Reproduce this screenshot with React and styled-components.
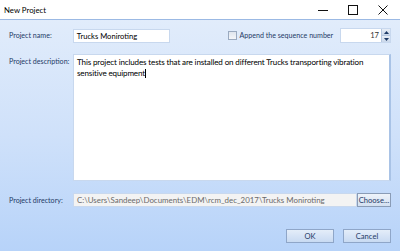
import React from 'react'
import styled, { createGlobalStyle } from 'styled-components'

const Global = createGlobalStyle`
    html, body { margin: 0; padding: 0; }
    body {
        width: 400px;
        height: 251px;
        overflow: hidden;
        font-family: Lato, "Noto Sans", sans-serif;
        font-size: 7.1px;
    }
`
const Window = styled.div`
    width: 400px;
    height: 251px;
    display: flex;
    flex-direction: column;
    background: #fff;
`
const TitleBar = styled.div`
    height: 19px;
    display: flex;
    align-items: center;
    padding-left: 4px;
    padding-right: 2px;
    border-bottom: 1px solid #9bb9e4;
    color: #000;
    font-size: 7.8px;
`
const Title = styled.div`
    flex: 1;
`
const Ctrl = styled.div`
    width: 30px;
    height: 19px;
    display: flex;
    align-items: center;
    justify-content: center;
`
const Body = styled.div`
    flex: 1;
    background: linear-gradient(#e1ecfb 0%, #cfe1fa 50%, #b7d3f9 100%);
    padding: 8px 9px 0 9px;
    display: flex;
    flex-direction: column;
`
const Row = styled.div`
    display: flex;
    align-items: ${p => p.$top ? 'flex-start' : 'center'};
    margin-bottom: ${p => p.$mb || 0}px;
    white-space: nowrap;
`
const Label = styled.div`
    width: 64px;
    color: #1e3a66;
    padding-top: ${p => p.$top ? '3px' : 0};
`
const Input = styled.div`
    height: 14px;
    width: ${p => p.$w}px;
    box-sizing: border-box;
    border: 1px solid #c8d8ee;
    background: ${p => p.$disabled ? '#f3f3f3' : '#fff'};
    color: ${p => p.$disabled ? '#6a6a6a' : '#000'};
    font-size: ${p => p.$disabled ? 7.9 : 7.6}px;
    padding: 0 3px;
    display: flex;
    align-items: center;
    overflow: hidden;
`
const Check = styled.div`
    margin-left: 58px;
    width: 7px;
    height: 7px;
    border: 1px solid #9aaac0;
    background: linear-gradient(#dfe5ee, #f4f6f9);
    margin-right: 3px;
`
const CheckLabel = styled.div`
    color: #1e3a66;
    width: 101px;
`
const Spin = styled.div`
    width: 51px;
    height: 15px;
    box-sizing: border-box;
    border: 1px solid #c8d8ee;
    background: #fff;
    display: flex;
    font-size: 7.6px;
`
const SpinValue = styled.div`
    flex: 1;
    text-align: right;
    padding-right: 2px;
    line-height: 13px;
    color: #333;
`
const SpinBtns = styled.div`
    width: 8px;
    display: flex;
    flex-direction: column;
    border-left: 1px solid #b5c7e0;
`
const SpinBtn = styled.div`
    flex: 1;
    background: linear-gradient(#e8eef7, #c9d7ea);
    display: flex;
    align-items: center;
    justify-content: center;
    border-bottom: 1px solid #b5c7e0;
    &:last-child { border-bottom: none; }
`
const Area = styled.div`
    width: 318px;
    height: 127px;
    box-sizing: border-box;
    border: 1px solid #c8d8ee;
    border-right: 2px solid #a9c3e6;
    background: #fff;
    padding: 2px 0 2px 3px;
    font-size: 8px;
    letter-spacing: -0.12px;
    text-rendering: geometricPrecision;
    line-height: 10.5px;
    color: #000;
    white-space: normal;
`
const Caret = styled.span`
    display: inline-block;
    width: 1px;
    height: 9px;
    background: #000;
    vertical-align: middle;
`
const Choose = styled.div`
    width: 34px;
    height: 14px;
    box-sizing: border-box;
    border: 1px solid #8a9cb6;
    background: linear-gradient(#eef3fa, #d3e0f1);
    color: #1e3a66;
    font-size: 7.6px;
    display: flex;
    align-items: center;
    justify-content: center;
`
const Footer = styled.div`
    display: flex;
    justify-content: flex-end;
    gap: 9px;
    margin-top: 22px;
`
const Button = styled.div`
    width: 48px;
    height: 14px;
    box-sizing: border-box;
    border: 1px solid #8fa6c8;
    background: linear-gradient(#e4edf9, #c8daf2);
    color: #1e3a66;
    font-size: 7.6px;
    display: flex;
    align-items: center;
    justify-content: center;
`

export default function App() {
    return (
        <>
            <Global />
            <Window>
                <TitleBar>
                    <Title>New Project</Title>
                    <Ctrl>
                        <svg width="10" height="10"><path d="M0 5.5h10" stroke="#111" strokeWidth="1" /></svg>
                    </Ctrl>
                    <Ctrl>
                        <svg width="10" height="10"><rect x="0.5" y="0.5" width="9" height="9" fill="none" stroke="#111" /></svg>
                    </Ctrl>
                    <Ctrl>
                        <svg width="10" height="10"><path d="M0.5 0.5l9 9M9.5 0.5l-9 9" stroke="#111" strokeWidth="1" /></svg>
                    </Ctrl>
                </TitleBar>
                <Body>
                    <Row $mb={11}>
                        <Label>Project name:</Label>
                        <Input $w={97}>Trucks Moniroting</Input>
                        <Check />
                        <CheckLabel>Append the sequence number</CheckLabel>
                        <Spin>
                            <SpinValue>17</SpinValue>
                            <SpinBtns>
                                <SpinBtn>
                                    <svg width="5" height="3"><path d="M0 3L2.5 0L5 3Z" fill="#1e3a66" /></svg>
                                </SpinBtn>
                                <SpinBtn>
                                    <svg width="5" height="3"><path d="M0 0L2.5 3L5 0Z" fill="#1e3a66" /></svg>
                                </SpinBtn>
                            </SpinBtns>
                        </Spin>
                    </Row>
                    <Row $top $mb={12}>
                        <Label $top>Project description:</Label>
                        <Area>
                            This project includes tests that are installed on different Trucks transporting vibration sensitive equipment<Caret />
                        </Area>
                    </Row>
                    <Row>
                        <Label>Project directory:</Label>
                        <Input $w={284} $disabled>C:\Users\Sandeep\Documents\EDM\rcm_dec_2017\Trucks Moniroting</Input>
                        <Choose>Choose...</Choose>
                    </Row>
                    <Footer>
                        <Button>OK</Button>
                        <Button>Cancel</Button>
                    </Footer>
                </Body>
            </Window>
        </>
    )
}
